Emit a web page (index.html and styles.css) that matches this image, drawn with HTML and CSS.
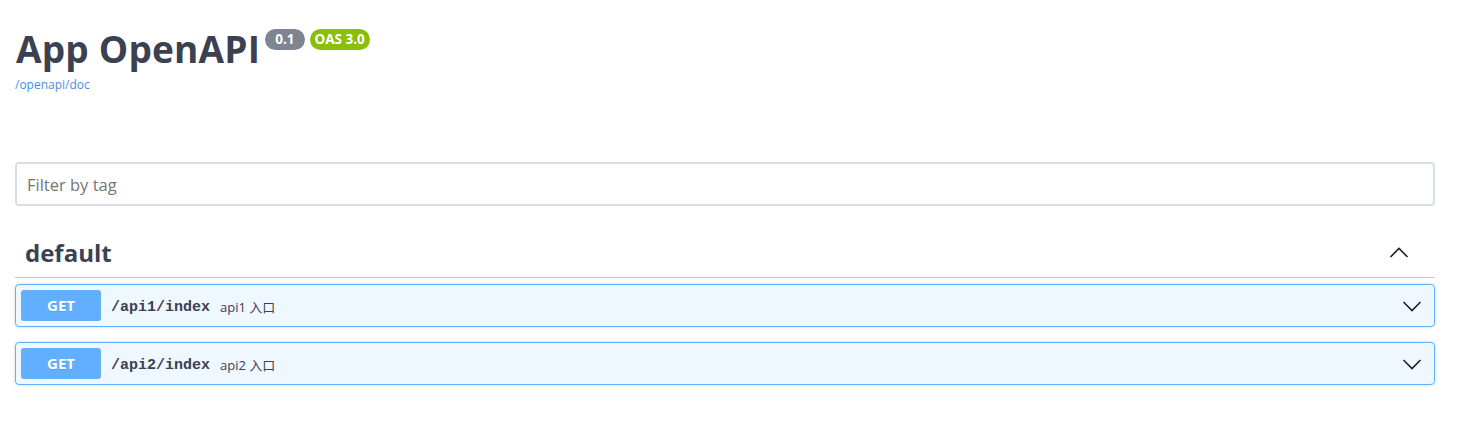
FILE: index.html
```html
<!DOCTYPE html>
<html lang="en">
<head>
<meta charset="utf-8">
<title>App OpenAPI</title>
<link rel="stylesheet" href="styles.css">
</head>
<body>
<div class="wrapper">
  <header class="info">
    <div class="title-row">
      <h1 class="title">App OpenAPI</h1>
      <span class="badge badge-version">0.1</span>
      <span class="badge badge-oas">OAS 3.0</span>
    </div>
    <a class="doc-link" href="#">/openapi/doc</a>
  </header>

  <div class="filter">
    <input class="filter-input" type="text" placeholder="Filter by tag">
  </div>

  <section class="tag-section">
    <div class="tag-heading">
      <h3 class="tag-name">default</h3>
      <svg class="arrow" width="20" height="20" viewBox="0 0 20 20"><polyline points="1.5,14 10,5.5 18.5,14" fill="none" stroke="#1f1f1f" stroke-width="1.6"/></svg>
    </div>

    <div class="opblock">
      <span class="method">GET</span>
      <span class="path">/api1/index</span>
      <span class="summary">api1 入口</span>
      <svg class="arrow arrow-down" width="20" height="20" viewBox="0 0 20 20"><polyline points="1.5,6 10,14.5 18.5,6" fill="none" stroke="#1f1f1f" stroke-width="1.6"/></svg>
    </div>

    <div class="opblock">
      <span class="method">GET</span>
      <span class="path">/api2/index</span>
      <span class="summary">api2 入口</span>
      <svg class="arrow arrow-down" width="20" height="20" viewBox="0 0 20 20"><polyline points="1.5,6 10,14.5 18.5,6" fill="none" stroke="#1f1f1f" stroke-width="1.6"/></svg>
    </div>
  </section>
</div>
</body>
</html>
```

FILE: styles.css
```css
* { box-sizing: border-box; }

body {
  margin: 0;
  background: #ffffff;
  font-family: "Open Sans", "Noto Sans", "Noto Sans CJK SC", sans-serif;
  color: #3b4151;
}

.wrapper {
  width: 1420px;
  margin-left: 15px;
}

.info {
  padding-top: 26px;
}

.title-row {
  display: flex;
  align-items: flex-start;
}

.title {
  margin: 0 0 0 1px;
  font-size: 37px;
  letter-spacing: 0.2px;
  line-height: 45px;
  font-weight: 700;
  color: #3b4151;
}

.badge {
  display: inline-block;
  margin-top: 3px;
  height: 21px;
  border-radius: 11px;
  color: #ffffff;
  font-size: 13.5px;
  line-height: 21px;
  font-weight: 700;
}

.badge-version { background: #7d8492; margin-left: 5px; padding: 0 10px; }
.badge-oas { background: #89bf04; margin-left: 5px; padding: 0 5px; }

.doc-link {
  display: block;
  margin-top: 5px;
  font-size: 12px;
  line-height: 17px;
  color: #4990e2;
  text-decoration: none;
}

.filter {
  margin-top: 69px;
}

.filter-input {
  display: block;
  width: 100%;
  height: 44px;
  margin: 0;
  padding: 8px 10px;
  border: 2px solid #d8dde7;
  border-radius: 4px;
  font-family: "Open Sans", "Noto Sans", sans-serif;
  font-size: 16.5px;
  color: #3b4151;
  background: #fff;
  outline: none;
}

.filter-input::placeholder { color: #757575; }

.tag-section {
  margin-top: 22px;
}

.tag-heading {
  display: flex;
  align-items: center;
  height: 50px;
  padding: 0 26px 0 10px;
  border-bottom: 1px solid rgba(59, 65, 81, 0.3);
  margin-bottom: 6px;
}

.tag-name {
  flex: 1;
  margin: 0;
  font-size: 24px;
  line-height: 30px;
  font-weight: 700;
  color: #3b4151;
}

.arrow { display: block; flex: none; }

.opblock {
  display: flex;
  align-items: center;
  padding: 5px;
  margin-bottom: 15px;
  border: 1px solid #61affe;
  border-radius: 4px;
  background: rgba(97, 175, 254, 0.1);
  box-shadow: 0 0 3px rgba(0, 0, 0, 0.19);
}

.method {
  min-width: 80px;
  padding: 6px 0;
  border-radius: 3px;
  background: #61affe;
  color: #ffffff;
  text-align: center;
  font-size: 15px;
  line-height: 19px;
  font-weight: 700;
  text-shadow: 0 1px 0 rgba(0, 0, 0, 0.1);
}

.path {
  padding: 4px 10px 0;
  font-family: "Liberation Mono", monospace;
  font-size: 15px;
  font-weight: 700;
  color: #3b4151;
}

.summary {
  flex: 1;
  padding-top: 2px;
  font-size: 13px;
  color: #3b4151;
}

.arrow-down { margin-right: 7px; }
```
